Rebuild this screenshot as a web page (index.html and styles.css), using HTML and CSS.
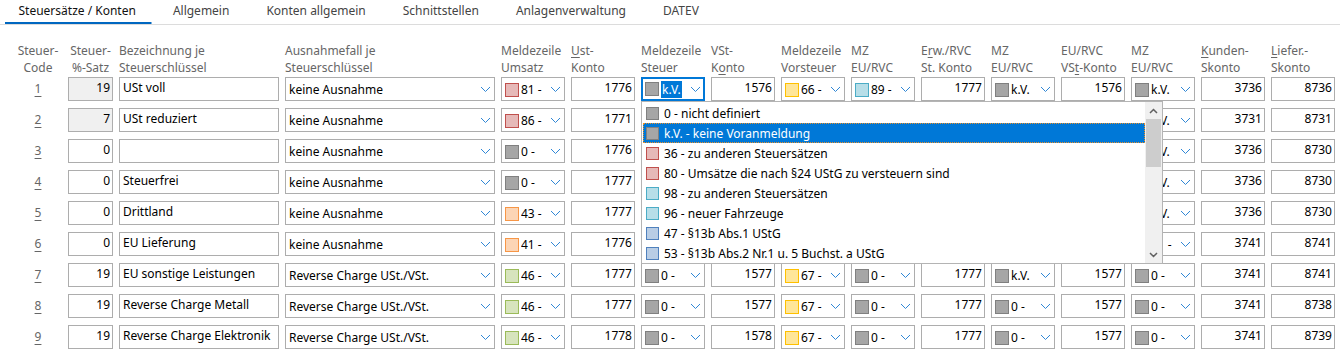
FILE: index.html
```html
<!DOCTYPE html>
<html lang="de">
<head>
  <meta charset="UTF-8" />
  <title>Steuersätze / Konten</title>
  <link rel="stylesheet" href="styles.css">
</head>
<body>
  <nav class="tabs">
    <div class="tab active">Steuersätze / Konten</div>
    <div class="tab">Allgemein</div>
    <div class="tab">Konten allgemein</div>
    <div class="tab">Schnittstellen</div>
    <div class="tab">Anlagenverwaltung</div>
    <div class="tab">DATEV</div>
  </nav>

  <div class="sheet">
    <div class="head">
      <div class="center">Steuer-<br>Code</div>
      <div class="center">Steuer-<br>%-Satz</div>
      <div>Bezeichnung je<br>Steuerschlüssel</div>
      <div>Ausnahmefall je<br>Steuerschlüssel</div>
      <div>Meldezeile<br>Umsatz</div>
      <div><u>U</u>st-<br>Konto</div>
      <div>Meldezeile<br>Steuer</div>
      <div>VSt-<br>K<u>o</u>nto</div>
      <div>Meldezeile<br>Vorsteuer</div>
      <div>MZ<br>EU/RVC</div>
      <div>E<u>r</u>w./RVC<br>St. Konto</div>
      <div>MZ<br>EU/RVC</div>
      <div>EU/RVC<br>VS<u>t</u>-Konto</div>
      <div>MZ<br>EU/RVC</div>
      <div><u>K</u>unden-<br>Skonto</div>
      <div><u>L</u>iefer.-<br>Skonto</div>
    </div>

    <!-- row 1 -->
    <div class="row">
      <div class="code"><u>1</u></div>
      <div class="box num ro">19</div>
      <div class="box txt">USt voll</div>
      <div class="box combo"><span class="val">keine Ausnahme</span><svg class="chev" viewBox="0 0 11 7"><path d="M1 1 5.5 5.5 10 1"/></svg></div>
      <div class="box combo"><i class="sw pink"></i><span class="val">81 -</span><svg class="chev" viewBox="0 0 11 7"><path d="M1 1 5.5 5.5 10 1"/></svg></div>
      <div class="box num">1776</div>
      <div class="focus-cell">
        <div class="box combo focus"><i class="sw gray"></i><span class="val"><span class="hl">k.V.</span></span><svg class="chev" viewBox="0 0 11 7"><path d="M1 1 5.5 5.5 10 1"/></svg></div>
        <div class="list">
          <div class="items">
            <div class="item"><i class="sw gray"></i>0 - nicht definiert</div>
            <div class="item sel"><i class="sw gray"></i>k.V. - keine Voranmeldung</div>
            <div class="item"><i class="sw pink"></i>36 - zu anderen Steuersätzen</div>
            <div class="item"><i class="sw pink"></i>80 - Umsätze die nach §24 UStG zu versteuern sind</div>
            <div class="item"><i class="sw lblue"></i>98 - zu anderen Steuersätzen</div>
            <div class="item"><i class="sw lblue"></i>96 - neuer Fahrzeuge</div>
            <div class="item"><i class="sw blue"></i>47 - §13b Abs.1 UStG</div>
            <div class="item"><i class="sw blue"></i>53 - §13b Abs.2 Nr.1 u. 5 Buchst. a UStG</div>
          </div>
          <div class="sbar">
            <svg class="arrow" viewBox="0 0 9 6"><path d="M1 5 4.5 1.5 8 5"/></svg>
            <div class="thumb"></div>
            <div class="track"></div>
            <svg class="arrow" viewBox="0 0 9 6"><path d="M1 1 4.5 4.5 8 1"/></svg>
          </div>
        </div>
      </div>
      <div class="box num">1576</div>
      <div class="box combo"><i class="sw yellow"></i><span class="val">66 -</span><svg class="chev" viewBox="0 0 11 7"><path d="M1 1 5.5 5.5 10 1"/></svg></div>
      <div class="box combo"><i class="sw lblue"></i><span class="val">89 -</span><svg class="chev" viewBox="0 0 11 7"><path d="M1 1 5.5 5.5 10 1"/></svg></div>
      <div class="box num">1777</div>
      <div class="box combo"><i class="sw gray"></i><span class="val">k.V.</span><svg class="chev" viewBox="0 0 11 7"><path d="M1 1 5.5 5.5 10 1"/></svg></div>
      <div class="box num">1576</div>
      <div class="box combo"><i class="sw gray"></i><span class="val">k.V.</span><svg class="chev" viewBox="0 0 11 7"><path d="M1 1 5.5 5.5 10 1"/></svg></div>
      <div class="box num">3736</div>
      <div class="box num">8736</div>
    </div>

    <!-- rows 2-6: the cells under the open list stay empty -->
    <div class="row">
      <div class="code"><u>2</u></div>
      <div class="box num ro">7</div>
      <div class="box txt">USt reduziert</div>
      <div class="box combo"><span class="val">keine Ausnahme</span><svg class="chev" viewBox="0 0 11 7"><path d="M1 1 5.5 5.5 10 1"/></svg></div>
      <div class="box combo"><i class="sw pink"></i><span class="val">86 -</span><svg class="chev" viewBox="0 0 11 7"><path d="M1 1 5.5 5.5 10 1"/></svg></div>
      <div class="box num">1771</div>
      <div class="box"></div>
      <div class="box"></div>
      <div class="box"></div>
      <div class="box"></div>
      <div class="box"></div>
      <div class="box"></div>
      <div class="box"></div>
      <div class="box combo"><i class="sw gray"></i><span class="val">k.V.</span><svg class="chev" viewBox="0 0 11 7"><path d="M1 1 5.5 5.5 10 1"/></svg></div>
      <div class="box num">3731</div>
      <div class="box num">8731</div>
    </div>

    <div class="row">
      <div class="code"><u>3</u></div>
      <div class="box num">0</div>
      <div class="box txt"></div>
      <div class="box combo"><span class="val">keine Ausnahme</span><svg class="chev" viewBox="0 0 11 7"><path d="M1 1 5.5 5.5 10 1"/></svg></div>
      <div class="box combo"><i class="sw gray"></i><span class="val">0 -</span><svg class="chev" viewBox="0 0 11 7"><path d="M1 1 5.5 5.5 10 1"/></svg></div>
      <div class="box num">1776</div>
      <div class="box"></div>
      <div class="box"></div>
      <div class="box"></div>
      <div class="box"></div>
      <div class="box"></div>
      <div class="box"></div>
      <div class="box"></div>
      <div class="box combo"><i class="sw gray"></i><span class="val">k.V.</span><svg class="chev" viewBox="0 0 11 7"><path d="M1 1 5.5 5.5 10 1"/></svg></div>
      <div class="box num">3736</div>
      <div class="box num">8730</div>
    </div>

    <div class="row">
      <div class="code"><u>4</u></div>
      <div class="box num">0</div>
      <div class="box txt">Steuerfrei</div>
      <div class="box combo"><span class="val">keine Ausnahme</span><svg class="chev" viewBox="0 0 11 7"><path d="M1 1 5.5 5.5 10 1"/></svg></div>
      <div class="box combo"><i class="sw gray"></i><span class="val">0 -</span><svg class="chev" viewBox="0 0 11 7"><path d="M1 1 5.5 5.5 10 1"/></svg></div>
      <div class="box num">1777</div>
      <div class="box"></div>
      <div class="box"></div>
      <div class="box"></div>
      <div class="box"></div>
      <div class="box"></div>
      <div class="box"></div>
      <div class="box"></div>
      <div class="box combo"><i class="sw gray"></i><span class="val">k.V.</span><svg class="chev" viewBox="0 0 11 7"><path d="M1 1 5.5 5.5 10 1"/></svg></div>
      <div class="box num">3736</div>
      <div class="box num">8730</div>
    </div>

    <div class="row">
      <div class="code"><u>5</u></div>
      <div class="box num">0</div>
      <div class="box txt">Drittland</div>
      <div class="box combo"><span class="val">keine Ausnahme</span><svg class="chev" viewBox="0 0 11 7"><path d="M1 1 5.5 5.5 10 1"/></svg></div>
      <div class="box combo"><i class="sw orange"></i><span class="val">43 -</span><svg class="chev" viewBox="0 0 11 7"><path d="M1 1 5.5 5.5 10 1"/></svg></div>
      <div class="box num">1777</div>
      <div class="box"></div>
      <div class="box"></div>
      <div class="box"></div>
      <div class="box"></div>
      <div class="box"></div>
      <div class="box"></div>
      <div class="box"></div>
      <div class="box combo"><i class="sw gray"></i><span class="val">k.V.</span><svg class="chev" viewBox="0 0 11 7"><path d="M1 1 5.5 5.5 10 1"/></svg></div>
      <div class="box num">3736</div>
      <div class="box num">8730</div>
    </div>

    <div class="row">
      <div class="code"><u>6</u></div>
      <div class="box num">0</div>
      <div class="box txt">EU Lieferung</div>
      <div class="box combo"><span class="val">keine Ausnahme</span><svg class="chev" viewBox="0 0 11 7"><path d="M1 1 5.5 5.5 10 1"/></svg></div>
      <div class="box combo"><i class="sw orange"></i><span class="val">41 -</span><svg class="chev" viewBox="0 0 11 7"><path d="M1 1 5.5 5.5 10 1"/></svg></div>
      <div class="box num">1776</div>
      <div class="box"></div>
      <div class="box"></div>
      <div class="box"></div>
      <div class="box"></div>
      <div class="box"></div>
      <div class="box"></div>
      <div class="box"></div>
      <div class="box combo"><i class="sw orange"></i><span class="val">41 -</span><svg class="chev" viewBox="0 0 11 7"><path d="M1 1 5.5 5.5 10 1"/></svg></div>
      <div class="box num">3741</div>
      <div class="box num">8741</div>
    </div>

    <!-- row 7 -->
    <div class="row">
      <div class="code"><u>7</u></div>
      <div class="box num">19</div>
      <div class="box txt">EU sonstige Leistungen</div>
      <div class="box combo"><span class="val">Reverse Charge USt./VSt.</span><svg class="chev" viewBox="0 0 11 7"><path d="M1 1 5.5 5.5 10 1"/></svg></div>
      <div class="box combo"><i class="sw green"></i><span class="val">46 -</span><svg class="chev" viewBox="0 0 11 7"><path d="M1 1 5.5 5.5 10 1"/></svg></div>
      <div class="box num">1777</div>
      <div class="box combo"><i class="sw gray"></i><span class="val">0 -</span><svg class="chev" viewBox="0 0 11 7"><path d="M1 1 5.5 5.5 10 1"/></svg></div>
      <div class="box num">1577</div>
      <div class="box combo"><i class="sw yellow"></i><span class="val">67 -</span><svg class="chev" viewBox="0 0 11 7"><path d="M1 1 5.5 5.5 10 1"/></svg></div>
      <div class="box combo"><i class="sw gray"></i><span class="val">0 -</span><svg class="chev" viewBox="0 0 11 7"><path d="M1 1 5.5 5.5 10 1"/></svg></div>
      <div class="box num">1777</div>
      <div class="box combo"><i class="sw gray"></i><span class="val">k.V.</span><svg class="chev" viewBox="0 0 11 7"><path d="M1 1 5.5 5.5 10 1"/></svg></div>
      <div class="box num">1577</div>
      <div class="box combo"><i class="sw gray"></i><span class="val">0 -</span><svg class="chev" viewBox="0 0 11 7"><path d="M1 1 5.5 5.5 10 1"/></svg></div>
      <div class="box num">3741</div>
      <div class="box num">8741</div>
    </div>

    <!-- row 8 -->
    <div class="row">
      <div class="code"><u>8</u></div>
      <div class="box num">19</div>
      <div class="box txt">Reverse Charge Metall</div>
      <div class="box combo"><span class="val">Reverse Charge USt./VSt.</span><svg class="chev" viewBox="0 0 11 7"><path d="M1 1 5.5 5.5 10 1"/></svg></div>
      <div class="box combo"><i class="sw green"></i><span class="val">46 -</span><svg class="chev" viewBox="0 0 11 7"><path d="M1 1 5.5 5.5 10 1"/></svg></div>
      <div class="box num">1777</div>
      <div class="box combo"><i class="sw gray"></i><span class="val">0 -</span><svg class="chev" viewBox="0 0 11 7"><path d="M1 1 5.5 5.5 10 1"/></svg></div>
      <div class="box num">1577</div>
      <div class="box combo"><i class="sw yellow"></i><span class="val">67 -</span><svg class="chev" viewBox="0 0 11 7"><path d="M1 1 5.5 5.5 10 1"/></svg></div>
      <div class="box combo"><i class="sw gray"></i><span class="val">0 -</span><svg class="chev" viewBox="0 0 11 7"><path d="M1 1 5.5 5.5 10 1"/></svg></div>
      <div class="box num">1777</div>
      <div class="box combo"><i class="sw gray"></i><span class="val">0 -</span><svg class="chev" viewBox="0 0 11 7"><path d="M1 1 5.5 5.5 10 1"/></svg></div>
      <div class="box num">1577</div>
      <div class="box combo"><i class="sw gray"></i><span class="val">0 -</span><svg class="chev" viewBox="0 0 11 7"><path d="M1 1 5.5 5.5 10 1"/></svg></div>
      <div class="box num">3741</div>
      <div class="box num">8738</div>
    </div>

    <!-- row 9 -->
    <div class="row">
      <div class="code"><u>9</u></div>
      <div class="box num">19</div>
      <div class="box txt">Reverse Charge Elektronik</div>
      <div class="box combo"><span class="val">Reverse Charge USt./VSt.</span><svg class="chev" viewBox="0 0 11 7"><path d="M1 1 5.5 5.5 10 1"/></svg></div>
      <div class="box combo"><i class="sw green"></i><span class="val">46 -</span><svg class="chev" viewBox="0 0 11 7"><path d="M1 1 5.5 5.5 10 1"/></svg></div>
      <div class="box num">1778</div>
      <div class="box combo"><i class="sw gray"></i><span class="val">0 -</span><svg class="chev" viewBox="0 0 11 7"><path d="M1 1 5.5 5.5 10 1"/></svg></div>
      <div class="box num">1578</div>
      <div class="box combo"><i class="sw yellow"></i><span class="val">67 -</span><svg class="chev" viewBox="0 0 11 7"><path d="M1 1 5.5 5.5 10 1"/></svg></div>
      <div class="box combo"><i class="sw gray"></i><span class="val">0 -</span><svg class="chev" viewBox="0 0 11 7"><path d="M1 1 5.5 5.5 10 1"/></svg></div>
      <div class="box num">1777</div>
      <div class="box combo"><i class="sw gray"></i><span class="val">0 -</span><svg class="chev" viewBox="0 0 11 7"><path d="M1 1 5.5 5.5 10 1"/></svg></div>
      <div class="box num">1577</div>
      <div class="box combo"><i class="sw gray"></i><span class="val">0 -</span><svg class="chev" viewBox="0 0 11 7"><path d="M1 1 5.5 5.5 10 1"/></svg></div>
      <div class="box num">3741</div>
      <div class="box num">8739</div>
    </div>
  </div>
</body>
</html>
```

FILE: styles.css
```css
body {
  margin: 0;
  background: #fff;
  font-family: "Noto Sans", "Segoe UI", sans-serif;
  font-size: 12px;
  color: #000;
}

/* tab strip */
.tabs {
  display: flex;
  height: 25px;
  box-sizing: border-box;
  border-bottom: 1px solid #dcdcdc;
}

.tab {
  padding: 0 18.5px;
  line-height: 22px;
  color: #444;
  white-space: nowrap;
}

.tab.active {
  color: #111;
  background: linear-gradient(#0067c0, #0067c0) no-repeat 5px 22px / calc(100% - 7.5px) 2px;
}

/* grid of tax keys */
.sheet {
  padding: 17px 0 0 14px;
}

.head,
.row {
  display: grid;
  grid-template-columns: 48px 45px 160px 210px repeat(12, 64px);
  column-gap: 6px;
}

.head {
  height: 35px;
  line-height: 17px;
  color: #666;
  white-space: nowrap;
}

.head .center {
  text-align: center;
}

.head u {
  text-decoration-thickness: 1px;
  text-underline-offset: 2px;
}

.row {
  height: 24px;
  margin-bottom: 7px;
}

.code {
  text-align: center;
  line-height: 24px;
  color: #666;
}

.code u {
  text-underline-offset: 3px;
}

.box {
  height: 24px;
  box-sizing: border-box;
  border: 1px solid #adadad;
  background: #fff;
  white-space: nowrap;
  overflow: hidden;
}

.num {
  text-align: right;
  padding-right: 2px;
  line-height: 19px;
}

.ro {
  background: #f0f0f0;
}

.txt {
  padding-left: 3px;
  line-height: 19px;
}

.combo {
  display: flex;
  align-items: center;
  padding: 1px 3px 0 3px;
}

.combo .val {
  flex: 1;
  overflow: hidden;
}

.chev {
  width: 11px;
  height: 7px;
  flex: none;
  fill: none;
  stroke: #2f87d6;
  stroke-width: 1;
}

/* colour markers of the report lines */
.sw {
  display: inline-block;
  flex: none;
  width: 14px;
  height: 14px;
  box-sizing: border-box;
  border: 1px solid #808080;
  background: #a6a6a6;
  margin-right: 2px;
}

.sw.pink { background: #e6b9b8; border-color: #c0504d; }
.sw.orange { background: #fcd5b5; border-color: #f79646; }
.sw.green { background: #d7e4bd; border-color: #9bbb59; }
.sw.yellow { background: #ffe699; border-color: #ffc000; }
.sw.lblue { background: #b7dee8; border-color: #4bacc6; }
.sw.blue { background: #b9cde5; border-color: #4f81bd; }

/* open combo box */
.focus-cell {
  position: relative;
}

.combo.focus {
  border: 2px solid #0078d7;
  padding: 0 2px 0 2px;
}

.hl {
  background: #0078d7;
  color: #fff;
  padding: 1px 1px 2px;
}

.list {
  position: absolute;
  left: 0;
  top: 24px;
  z-index: 2;
  width: 522px;
  height: 163px;
  box-sizing: border-box;
  border: 1px solid #b4b4b4;
  background: #fff;
  display: flex;
}

.items {
  flex: 1;
  padding-top: 1px;
}

.item {
  height: 20px;
  display: flex;
  align-items: center;
  padding-left: 4px;
  white-space: nowrap;
}

.item .sw {
  width: 13px;
  height: 13px;
  margin-right: 5px;
}

.item.sel {
  background: #0078d7;
  color: #fff;
  outline: 1px dotted #e8902a;
  outline-offset: -1px;
  margin-left: 1px;
  padding-left: 3px;
}

.sbar {
  width: 17px;
  background: #f0f0f0;
  display: flex;
  flex-direction: column;
  align-items: center;
}

.arrow {
  width: 9px;
  height: 6px;
  margin: 6px 0 5px;
  fill: none;
  stroke: #606060;
  stroke-width: 1.5;
}

.thumb {
  width: 15px;
  height: 48px;
  background: #cdcdcd;
}

.track {
  flex: 1;
}
```
